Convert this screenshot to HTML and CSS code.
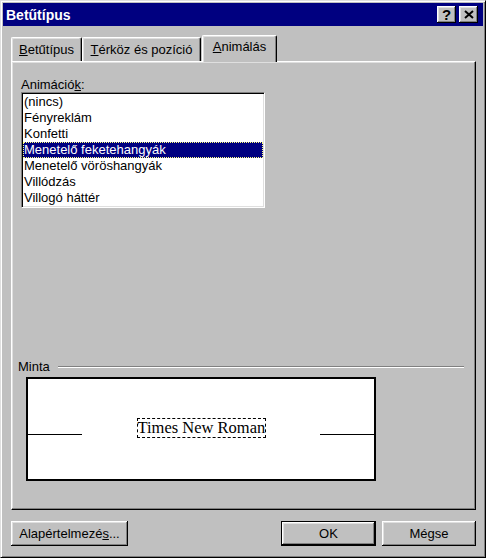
FILE: index.html
```html
<!DOCTYPE html>
<html lang="hu">
<head>
<meta charset="utf-8">
<title>Betűtípus</title>
<link rel="stylesheet" href="styles.css">
</head>
<body>
<div class="window">
  <div class="titlebar">
    <span class="title">Betűtípus</span>
    <div class="tb-buttons">
      <button class="tb-btn help">?</button>
      <button class="tb-btn close"><svg width="10" height="9" viewBox="0 0 10 9"><path d="M1 1L9 8M9 1L1 8" stroke="#000" stroke-width="2" fill="none"/></svg></button>
    </div>
  </div>
  <div class="content">
    <div class="tabs">
      <div class="tab t1"><u>B</u>etűtípus</div>
      <div class="tab t2"><u>T</u>érköz és pozíció</div>
      <div class="tab t3 active"><u>A</u>nimálás</div>
    </div>
    <div class="panel">
      <div class="label">Animáció<u>k</u>:</div>
      <div class="listbox">
        <div class="row">(nincs)</div>
        <div class="row">Fényreklám</div>
        <div class="row">Konfetti</div>
        <div class="row selected">Menetelő feketehangyák</div>
        <div class="row">Menetelő vöröshangyák</div>
        <div class="row">Villódzás</div>
        <div class="row">Villogó háttér</div>
      </div>
      <div class="group">
        <div class="group-head"><span>Minta</span><span class="rule"></span></div>
        <div class="preview">
          <div class="preview-row">
            <div class="base-line"></div>
            <div class="sample">Times New Roman</div>
            <div class="base-line"></div>
          </div>
        </div>
      </div>
    </div>
    <div class="buttons">
      <button class="btn wide">Alapértelmezé<u>s</u>...</button>
      <button class="btn default">OK</button>
      <button class="btn cancel">Mégse</button>
    </div>
  </div>
</div>
</body>
</html>
```
FILE: styles.css
```css
html, body {
  margin: 0;
  padding: 0;
  background: #c0c0c0;
}
body {
  font-family: "Liberation Sans", Arial, sans-serif;
  font-size: 13px;
  color: #000;
}
.window {
  box-sizing: border-box;
  width: 486px;
  height: 558px;
  border: 1px solid;
  border-color: #dfdfdf #000 #000 #dfdfdf;
  box-shadow: inset 1px 1px #fff, inset -1px -1px #808080;
  padding: 2px;
  display: flex;
  flex-direction: column;
  background: #c0c0c0;
}
.titlebar {
  height: 23px;
  background: #000080;
  display: flex;
  align-items: center;
  padding: 0 5px 0 3px;
}
.title {
  color: #fff;
  font-weight: bold;
  font-size: 14px;
}
.tb-buttons {
  margin-left: auto;
  display: flex;
  gap: 3px;
}
.tb-btn {
  width: 19px;
  height: 17px;
  padding: 0;
  border: none;
  background: #c0c0c0;
  box-shadow: inset -1px -1px #000, inset 1px 1px #fff, inset -2px -2px #808080, inset 2px 2px #dfdfdf;
  display: flex;
  align-items: center;
  justify-content: center;
  font-family: "Liberation Sans", Arial, sans-serif;
  font-weight: bold;
  font-size: 15px;
  line-height: 15px;
  color: #000;
}
.tb-btn svg { display: block; margin-top: -1px; }
.content {
  flex: 1;
  display: flex;
  flex-direction: column;
  padding: 9px 7px 0 8px;
}
.tabs {
  display: flex;
  align-items: flex-end;
  height: 26px;
  position: relative;
  z-index: 1;
}
.tab {
  box-sizing: border-box;
  height: 24px;
  border-top: 1px solid #fff;
  border-left: 1px solid #fff;
  border-right: 1px solid #000;
  border-radius: 2px 2px 0 0;
  box-shadow: inset -1px 0 #808080, inset 1px 1px #dfdfdf;
  background: #c0c0c0;
  text-align: center;
  line-height: 20px;
  padding-top: 2px;
  white-space: nowrap;
}
.t1 { width: 71px; }
.t2 { width: 119px; }
.t3 { width: 75px; margin-left: 1px; }
.tab.active {
  height: 27px;
  margin-bottom: -1px;
  padding-top: 1px;
}
.panel {
  box-sizing: border-box;
  height: 449px;
  border-top: 1px solid #fff;
  border-left: 1px solid #fff;
  border-right: 1px solid #000;
  border-bottom: 1px solid #000;
  box-shadow: inset -1px -1px #808080, inset 1px 1px #dfdfdf;
  padding: 15px 11px 0 6px;
  display: flex;
  flex-direction: column;
}
.label {
  margin-left: 3px;
  line-height: 15px;
  height: 15px;
}
.listbox {
  box-sizing: border-box;
  margin-left: 3px;
  width: 244px;
  height: 116px;
  background: #fff;
  border: 1px solid;
  border-color: #808080 #fff #fff #808080;
  box-shadow: inset 1px 1px #000, inset -1px -1px #dfdfdf;
  padding: 1px;
}
.row {
  height: 16px;
  line-height: 16px;
  padding-left: 1px;
  white-space: nowrap;
}
.row.selected {
  background: #000080;
  color: #fff;
  outline: 1px dotted #ffff80;
  outline-offset: -1px;
}
.group {
  margin-top: 151px;
}
.group-head {
  display: flex;
  align-items: center;
  height: 15px;
  line-height: 15px;
}
.rule {
  flex: 1;
  margin-left: 8px;
  height: 0;
  border-top: 1px solid #808080;
  border-bottom: 1px solid #fff;
}
.preview {
  box-sizing: border-box;
  margin: 3px 0 0 8px;
  width: 350px;
  height: 104px;
  border: 2px solid #000;
  background: #fff;
}
.preview-row {
  display: flex;
  justify-content: space-between;
  align-items: flex-start;
  padding-top: 39px;
}
.base-line {
  width: 54px;
  height: 1px;
  background: #000;
  margin-top: 16px;
}
.sample {
  box-sizing: border-box;
  width: 129px;
  height: 20px;
  border: 1px dashed #000;
  font-family: "Liberation Serif", "Times New Roman", serif;
  font-size: 16.5px;
  line-height: 18px;
  padding-left: 0;
  white-space: nowrap;
  margin: 0 1px;
}
.buttons {
  display: flex;
  margin-top: 11px;
}
.btn {
  box-sizing: border-box;
  height: 25px;
  padding: 0;
  border: none;
  background: #c0c0c0;
  box-shadow: inset -1px -1px #000, inset 1px 1px #fff, inset -2px -2px #808080, inset 2px 2px #dfdfdf;
  font-family: "Liberation Sans", Arial, sans-serif;
  font-size: 13px;
  color: #000;
}
.btn.wide { width: 117px; }
.btn.default {
  width: 95px;
  margin-left: auto;
  border: 1px solid #000;
}
.btn.cancel {
  width: 94px;
  margin-left: 6px;
}
```
